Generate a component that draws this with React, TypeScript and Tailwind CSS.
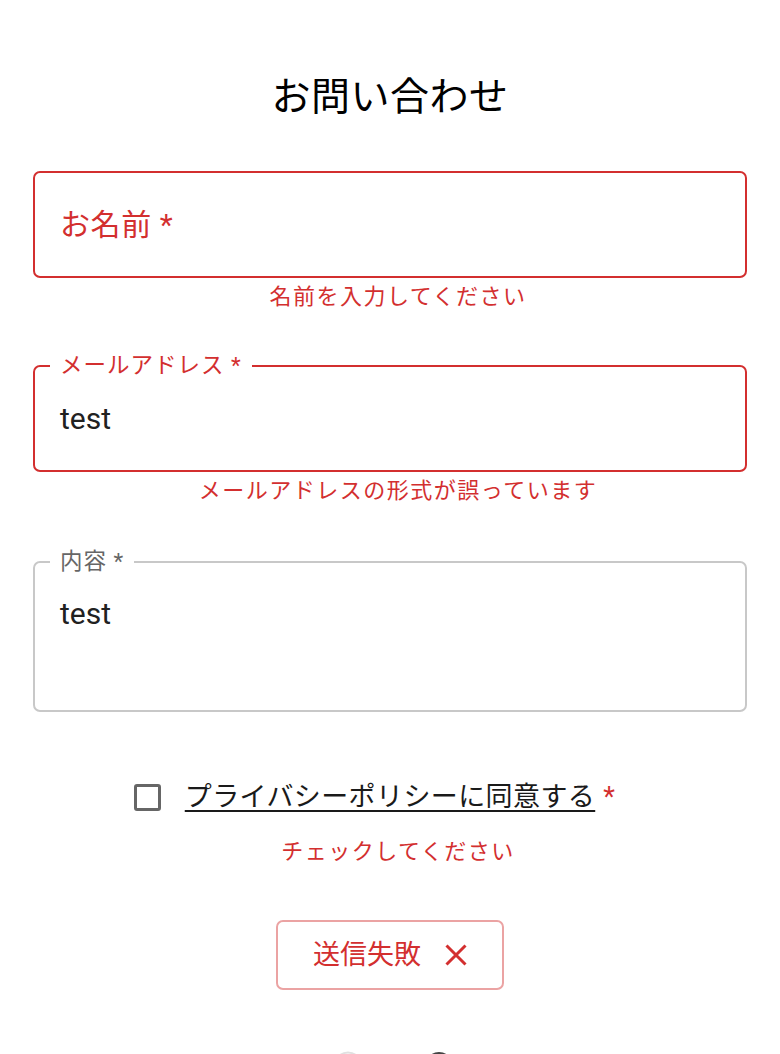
import React from "react";

const red = "text-[#d32f2f]";

function HelperText({ children }: { children: React.ReactNode }) {
  return (
    <p className={`mt-[4px] pl-[16px] text-center text-[22px] leading-[30px] tracking-[1.5px] ${red}`}>
      {children}
    </p>
  );
}

function CloseIcon() {
  return (
    <svg width="22" height="22" viewBox="0 0 22 22" aria-hidden="true">
      <path d="M1.5 1.5 20.5 20.5M20.5 1.5 1.5 20.5" stroke="#d32f2f" strokeWidth="3" />
    </svg>
  );
}

export default function App() {
  return (
    <div className="h-[1054px] overflow-hidden bg-white font-[Roboto,'Noto_Sans_CJK_JP',sans-serif]">
      <div className="flex flex-col px-[33px]">
        <h1 className="mt-[74px] text-center text-[39px] leading-[46px] tracking-[0.5px] text-black">お問い合わせ</h1>

        {/* name: empty, error */}
        <div className="mt-[51px] flex h-[107px] items-center rounded-[7px] border-2 border-[#d32f2f] pl-[25px]">
          <span className={`text-[30px] leading-[34px] tracking-[0.6px] ${red}`}>お名前 *</span>
        </div>
        <HelperText>名前を入力してください</HelperText>

        {/* email: filled, error */}
        <div className="relative mt-[53px] flex h-[107px] items-center rounded-[7px] border-2 border-[#d32f2f] pl-[25px]">
          <span className={`absolute -top-[15px] left-[15px] bg-white px-[10px] text-[22.5px] leading-[26px] tracking-[1px] ${red}`}>
            メールアドレス *
          </span>
          <span className="text-[30px] leading-[34px] text-[#212121]">test</span>
        </div>
        <HelperText>メールアドレスの形式が誤っています</HelperText>

        {/* message */}
        <div className="relative mt-[55px] h-[151px] rounded-[7px] border-2 border-[#c8c8c8] pl-[25px] pt-[34px]">
          <span className="absolute -top-[15px] left-[15px] bg-white px-[10px] text-[22.5px] leading-[26px] tracking-[1px] text-[#666]">
            内容 *
          </span>
          <p className="text-[30px] leading-[34px] text-[#212121]">test</p>
        </div>

        {/* privacy checkbox */}
        <div className="mt-[65px] flex h-[40px] items-center justify-center pr-[31px]">
          <div className="h-[27px] w-[27px] rounded-[3px] border-[3px] border-[#666]" />
          <span className="ml-[24px] text-[27px] leading-[40px] tracking-[0.4px] text-[#1a1a1a]">
            <span className="underline decoration-[2px] underline-offset-[4px]">プライバシーポリシーに同意する</span>
            <span className={`ml-[8px] ${red}`}>*</span>
          </span>
        </div>
        <p className={`mt-[20px] pl-[16px] text-center text-[22px] leading-[30px] tracking-[1.5px] ${red}`}>
          チェックしてください
        </p>

        {/* submit state */}
        <div className="mt-[53px] flex justify-center">
          <button className="flex h-[70px] items-center gap-[24px] rounded-[7px] border-2 border-[#eba3a3] px-[35px]">
            <span className={`text-[27px] leading-[34px] ${red}`}>送信失敗</span>
            <CloseIcon />
          </button>
        </div>

        {/* footer icons (cut off) */}
        <div className="mt-[61px] flex justify-center gap-[61px] pl-[6px]">
          <svg width="30" height="30" viewBox="0 0 30 30" aria-hidden="true">
            <circle cx="15" cy="15" r="13.5" fill="none" stroke="#e0e0e0" strokeWidth="2" />
          </svg>
          <svg width="30" height="30" viewBox="0 0 30 30" aria-hidden="true">
            <circle cx="15" cy="15" r="14" fill="#444" />
          </svg>
        </div>
      </div>
    </div>
  );
}
